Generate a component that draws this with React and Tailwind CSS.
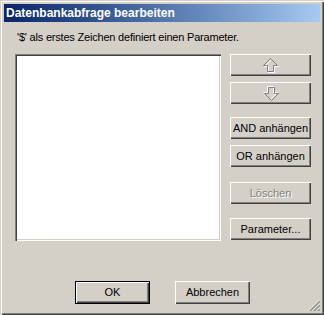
// Win2k-style bevels
const raised = 'shadow-[inset_1px_1px_#ffffff,inset_-1px_-1px_#404040,inset_-2px_-2px_#808080]';
const sunken = 'shadow-[inset_1px_1px_#808080,inset_2px_2px_#404040,inset_-1px_-1px_#ffffff,inset_-2px_-2px_#d4d0c8]';

const ArrowGlyph = ({ down }) => {
  const pts = '7.5,0.5 14.5,7.5 10.5,7.5 10.5,13.5 4.5,13.5 4.5,7.5 0.5,7.5';
  return (
    <svg width="16" height="15" viewBox="0 0 16 15" className={down ? 'rotate-180' : ''}>
      <polygon points={pts} transform="translate(1 1)" fill="none" stroke="#ffffff" strokeWidth="1" />
      <polygon points={pts} fill="none" stroke="#808080" strokeWidth="1" />
    </svg>
  );
};

const Button = ({ children, className = '', disabled, isDefault }) => {
  if (isDefault) {
    return (
      <div className={`border border-black bg-[#d4d0c8] ${className}`}>
        <div className={`h-full flex items-center justify-center ${raised}`}>{children}</div>
      </div>
    );
  }
  return (
    <div
      className={`bg-[#d4d0c8] flex items-center justify-center ${raised} ${
        disabled ? 'text-[#808080] [text-shadow:1px_1px_#ffffff]' : 'text-black'
      } ${className}`}
    >
      {children}
    </div>
  );
};

const SizeGrip = () => (
  <svg width="12" height="12" viewBox="0 0 12 12">
    {[0, 4, 8].map((o) => (
      <g key={o}>
        <line x1={12} y1={o + 0.5} x2={o + 0.5} y2={12} stroke="#ffffff" />
        <line x1={12} y1={o + 1.5} x2={o + 1.5} y2={12} stroke="#808080" />
        <line x1={12} y1={o + 2.5} x2={o + 2.5} y2={12} stroke="#808080" />
      </g>
    ))}
  </svg>
);

export default function App() {
  return (
    <div
      className="w-[324px] h-[315px] bg-[#d4d0c8] relative p-[4px] flex flex-col text-[11px] text-black shadow-[inset_1px_1px_#d4d0c8,inset_2px_2px_#ffffff,inset_-1px_-1px_#404040,inset_-2px_-2px_#808080]"
      style={{ fontFamily: '"Liberation Sans", Arial, sans-serif' }}
    >
      {/* Title bar */}
      <div className="h-[18px] bg-gradient-to-r from-[#0a246a] to-[#a6caf0] flex items-center pl-[2px]">
        <span className="text-white font-bold text-[12px] leading-none">Datenbankabfrage bearbeiten</span>
      </div>

      {/* Body */}
      <div className="flex-1 flex flex-col">
        <div className="mt-[8px] ml-[13px] h-[14px] leading-[14px] tracking-[-0.2px]">
          '$' als erstes Zeichen definiert einen Parameter.
        </div>

        <div className="flex mt-[10px] ml-[11px]">
          <div className={`w-[206px] h-[187px] bg-white ${sunken}`} />

          <div className="ml-[9px] w-[81px] flex flex-col">
            <Button className="h-[22px]">
              <ArrowGlyph />
            </Button>
            <Button className="h-[22px] mt-[6px]">
              <ArrowGlyph down />
            </Button>
            <Button className="h-[22px] mt-[13px]">AND anhängen</Button>
            <Button className="h-[22px] mt-[6px]">OR anhängen</Button>
            <Button className="h-[22px] mt-[15px]" disabled>
              Löschen
            </Button>
            <Button className="h-[22px] mt-[14px]">Parameter...</Button>
          </div>
        </div>

        <div className="flex mt-[40px] ml-[71px] gap-[25px]">
          <Button isDefault className="w-[75px] h-[23px]">
            OK
          </Button>
          <Button className="w-[75px] h-[23px]">Abbrechen</Button>
        </div>
      </div>

      <div className="absolute right-[4px] bottom-[4px]">
        <SizeGrip />
      </div>
    </div>
  );
}
